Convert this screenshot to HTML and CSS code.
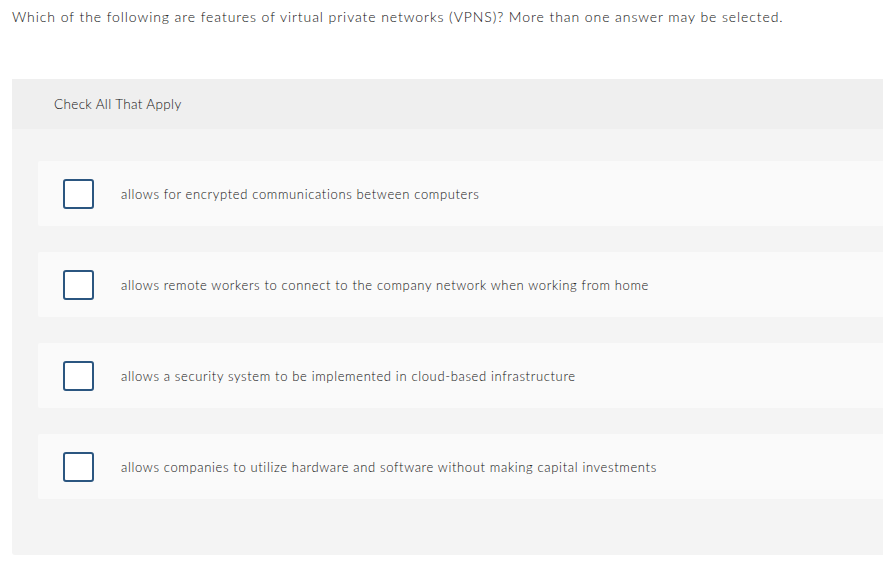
FILE: index.html
```html
<!DOCTYPE html>
<html>
<head>
<meta charset="utf-8">
<link rel="stylesheet" href="styles.css">
</head>
<body>
<p class="question">Which of the following are features of virtual private networks (VPNS)? More than one answer may be selected.</p>
<div class="panel">
  <div class="panel-head">Check All That Apply</div>
  <div class="options">
    <label class="option"><span class="box"></span><span class="text">allows for encrypted communications between computers</span></label>
    <label class="option"><span class="box"></span><span class="text">allows remote workers to connect to the company network when working from home</span></label>
    <label class="option"><span class="box"></span><span class="text">allows a security system to be implemented in cloud-based infrastructure</span></label>
    <label class="option"><span class="box"></span><span class="text">allows companies to utilize hardware and software without making capital investments</span></label>
  </div>
</div>
</body>
</html>
```
FILE: styles.css
```css
html, body {
  margin: 0;
  padding: 0;
  background: #ffffff;
  overflow: hidden;
}
body {
  font-family: "Lato", "Liberation Sans", sans-serif;
  font-weight: 300;
  color: #111111;
  width: 883px;
  height: 579px;
}
.question {
  margin: 0;
  padding: 8px 0 0 12px;
  font-size: 14px;
  line-height: 18px;
  letter-spacing: 0.92px;
  white-space: nowrap;
}
.panel {
  margin: 53px 0 0 12px;
  background: #f4f4f4;
  border-radius: 3px 0 0 3px;
  height: 476px;
  display: flex;
  flex-direction: column;
}
.panel-head {
  background: #efefef;
  height: 50px;
  padding-left: 42px;
  display: flex;
  align-items: center;
  font-size: 13.5px;
  letter-spacing: 0.35px;
}
.options {
  display: flex;
  flex-direction: column;
  gap: 26px;
  padding: 32px 0 0 26px;
}
.option {
  background: #fafafa;
  height: 65px;
  display: flex;
  align-items: center;
  padding-left: 25px;
  border-radius: 2px 0 0 2px;
}
.box {
  width: 27px;
  height: 26px;
  border: 2px solid #2b5680;
  border-radius: 3px;
  background: #fff;
  flex: none;
}
.text {
  margin-left: 27px;
  font-size: 13px;
  letter-spacing: 0.65px;
  padding-top: 1px;
}
```
